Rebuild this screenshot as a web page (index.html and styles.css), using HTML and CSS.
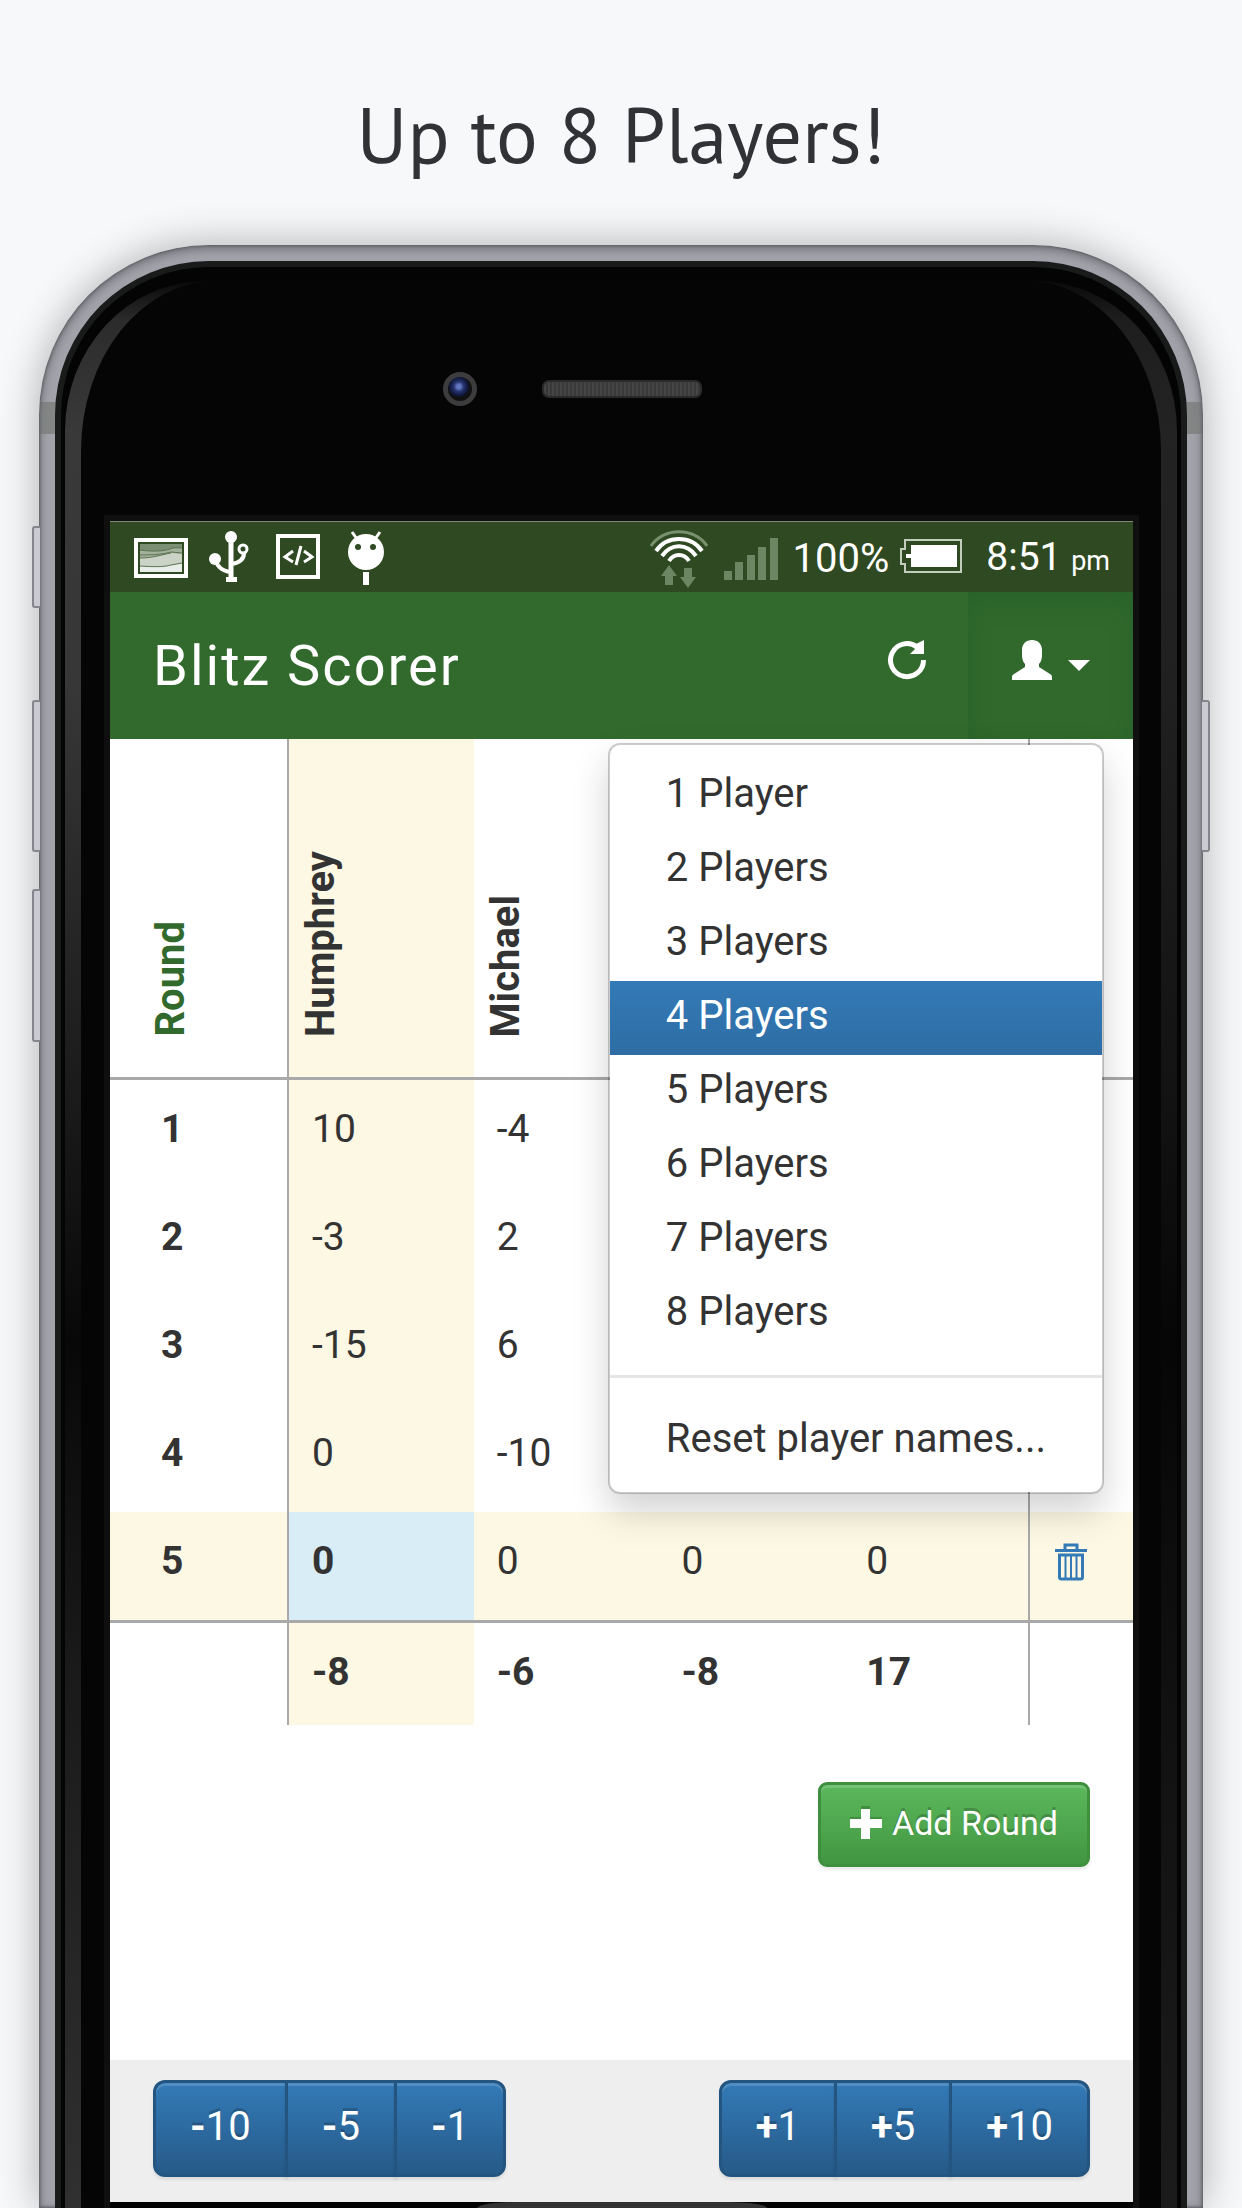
FILE: index.html
```html
<!DOCTYPE html>
<html lang="en">
<head>
<meta charset="utf-8">
<meta name="viewport" content="width=device-width, initial-scale=1">
<title>Blitz Scorer</title>
<link rel="stylesheet" href="styles.css">
</head>
<body>
<h1 class="headline">Up to 8 Players!</h1>
<div class="phone">
  <span class="key key-mute"></span>
  <span class="key key-up"></span>
  <span class="key key-down"></span>
  <span class="key key-power"></span>
  <div class="rim">
    <div class="glare">
      <div class="face">
        <div class="sensors">
          <span class="camera"></span>
          <span class="speaker"></span>
        </div>
        <div class="screen">
          <div class="status">
            <div class="notices">
              <svg width="54" height="56" viewBox="0 0 54 56">
                <rect x="2" y="9" width="50" height="36" fill="none" stroke="#fff" stroke-width="4"/>
                <rect x="6" y="13" width="42" height="28" fill="#7b8f72"/>
                <path d="M6 19c14 2 24 1 30-1 4-2 8-1 12-1v24H6z" fill="#a3b19c"/>
                <path d="M6 27c14 0 24-4 31-5l11 1v18H6z" fill="#cbd3c7"/>
                <path d="M6 35c14 1 24 1 31-1l11-2v9H6z" fill="#e9ede8"/>
                <path d="M6 19c14 2 24 1 30-1 4-2 8-1 12-1M6 24c14 0 24-1 31-3l11 1M6 27c14 0 24-4 31-5M6 35c14 1 24 1 31-1l11-2" fill="none" stroke="#5c7350" stroke-width="1"/>
                <rect x="5" y="12" width="44" height="30" fill="none" stroke="#2f4a22" stroke-width="2"/>
              </svg>
              <svg width="48" height="56" viewBox="0 0 48 56">
                <g fill="none" stroke="#fff">
                  <path d="M23 8v42" stroke-width="5"/>
                  <path d="M7 24c0 11 7 16 16 17" stroke-width="4"/>
                  <path d="M36 22c0 7-5 10-13 11" stroke-width="4"/>
                  <circle cx="35" cy="18" r="4" stroke-width="3"/>
                </g>
                <g fill="#fff"><circle cx="23" cy="6" r="6"/><circle cx="7" cy="28" r="6"/><path d="M18 46h11v5H18z"/></g>
              </svg>
              <svg width="44" height="56" viewBox="0 0 44 56">
                <rect x="2" y="5" width="40" height="41" fill="none" stroke="#fff" stroke-width="4"/>
                <path d="M17 20l-8 6 8 5M28 20l8 6-8 5" fill="none" stroke="#fff" stroke-width="3"/>
                <path d="M25 15l-5 19" stroke="#fff" stroke-width="3"/>
              </svg>
              <svg width="48" height="56" viewBox="0 0 48 56">
                <path d="M12 1l5 7M40 1l-5 7" stroke="#fff" stroke-width="3"/>
                <circle cx="26" cy="21" r="18" fill="#fff"/>
                <circle cx="18" cy="16" r="3" fill="#2f4a22"/><circle cx="33" cy="16" r="3" fill="#2f4a22"/>
                <path d="M23 41h6v13h-6z" fill="#fff"/>
              </svg>
            </div>
            <svg width="60" height="58" viewBox="0 0 60 58">
              <g fill="none" stroke-width="4">
                <path d="M2 16C14-3 46-3 58 16" stroke="#78906d" stroke-width="3"/>
                <path d="M7 21C18 5 42 5 53 21M13 26C22 13 38 13 47 26M20 31C25 23 35 23 40 31" stroke="#fff"/>
              </g>
              <path d="M20 35l8 11h-4v9h-8v-9h-4zM39 58l8-11h-4v-9h-8v9h-4z" fill="#6c8562"/>
            </svg>
            <svg width="54" height="56" viewBox="0 0 54 56" fill="#6c8562">
              <path d="M0 40h8v9H0zM11 31h8v18h-8zM23 24h8v25h-8zM34 16h8v33h-8zM46 7h8v42h-8z"/>
            </svg>
            <span class="level">100%
              <svg width="64" height="56" viewBox="0 0 64 56">
                <path d="M6 11h56v32H6v-8H2V20h4z" fill="none" stroke="#c3cdbc" stroke-width="2"/>
                <path d="M12 16h46v22H12v-9H7v-4h5z" fill="#fff"/>
              </svg>
            </span>
            <span class="clock">8:51 <small class="ampm">pm</small></span>
          </div>
          <nav class="navbar">
            <a class="brand" href="#">Blitz Scorer</a>
            <button class="nav-button" type="button" aria-label="Restart">
              <svg width="40" height="40" viewBox="0 0 40 40">
                <path d="M36.500 20A16.500 16.500 0 1 1 30 7" fill="none" stroke="#fff" stroke-width="5"/>
                <path d="M37 0v14H23l5-5z" fill="#fff"/>
                <path d="M25 6l7 6 5-12z" fill="#fff"/>
              </svg>
            </button>
            <div class="dropdown">
              <button class="nav-button nav-open" type="button" aria-label="Players" aria-expanded="true">
                <svg width="40" height="40" viewBox="0 0 40 40" fill="#fff">
                  <path d="M20 0c6 0 10 4 10 10v5c0 4-1 7-3 9v3l11 7c2 1 2 2 2 6H0c0-4 0-5 2-6l11-7v-3c-2-2-3-5-3-9v-5C10 4 14 0 20 0z"/>
                </svg>
                <svg width="22" height="40" viewBox="0 0 22 40" fill="#fff"><path d="M0 20h22L11 31z"/></svg>
              </button>
              <ul class="menu">
                <li><a class="item" href="#">1 Player</a></li>
                <li><a class="item" href="#">2 Players</a></li>
                <li><a class="item" href="#">3 Players</a></li>
                <li><a class="item item-active" href="#">4 Players</a></li>
                <li><a class="item" href="#">5 Players</a></li>
                <li><a class="item" href="#">6 Players</a></li>
                <li><a class="item" href="#">7 Players</a></li>
                <li><a class="item" href="#">8 Players</a></li>
                <li class="divider" role="separator"></li>
                <li><a class="item" href="#">Reset player names...</a></li>
              </ul>
            </div>
          </nav>
          <main class="content">
            <table class="scores">
              <colgroup><col class="col-round"><col><col><col><col><col class="col-tools"></colgroup>
              <thead>
                <tr><th><span class="upright">Round</span></th><th class="current"><span class="upright">Humphrey</span></th><th><span class="upright">Michael</span></th><th></th><th></th><th></th></tr>
              </thead>
              <tbody>
                <tr><th>1</th><td class="current">10</td><td>-4</td><td></td><td></td><td></td></tr>
                <tr><th>2</th><td class="current">-3</td><td>2</td><td></td><td></td><td></td></tr>
                <tr><th>3</th><td class="current">-15</td><td>6</td><td></td><td></td><td></td></tr>
                <tr><th>4</th><td class="current">0</td><td>-10</td><td></td><td></td><td></td></tr>
                <tr class="current"><th>5</th><td class="editing">0</td><td>0</td><td>0</td><td>0</td>
                  <td><button class="trash" type="button" aria-label="Delete round">
                    <svg width="32" height="38" viewBox="0 0 32 38" fill="none" stroke="#337ab7">
                      <path d="M0 7.500h32" stroke-width="3"/>
                      <path d="M10 7V2h12v5" stroke-width="3"/>
                      <path d="M4.500 12v22q0 2 2 2h19q2 0 2-2V12z" stroke-width="3"/>
                      <path d="M10.500 13v22M16 13v22M21.500 13v22" stroke-width="2"/>
                    </svg></button></td></tr>
              </tbody>
              <tfoot>
                <tr><td></td><td class="current">-8</td><td>-6</td><td>-8</td><td>17</td><td></td></tr>
              </tfoot>
            </table>
            <button class="add" type="button">
              <svg width="32" height="34" viewBox="0 0 32 34"><path d="M11 0h9v11h12v9H20v11h-9V20H0v-9h11z" fill="#3f8f3f"/><path d="M11 3h9v10h12v9H20v11h-9V22H0v-9h11z" fill="#fff"/></svg>
              Add Round
            </button>
          </main>
          <footer class="toolbar">
            <div class="group">
              <button class="step" type="button"><b>-</b>10</button><button class="step" type="button"><b>-</b>5</button><button class="step" type="button"><b>-</b>1</button>
            </div>
            <div class="group">
              <button class="step" type="button"><b>+</b>1</button><button class="step" type="button"><b>+</b>5</button><button class="step" type="button"><b>+</b>10</button>
            </div>
          </footer>
        </div>
        <div class="chin"><span class="home"></span></div>
      </div>
    </div>
  </div>
</div>
</body>
</html>
```
FILE: styles.css
```css
* { box-sizing: border-box; }

body {
  margin: 0;
  min-height: 100vh;
  display: flex;
  flex-direction: column;
  background: #f6f8fa;
  color: #333;
  font: 39px/60px Roboto, "Liberation Sans", sans-serif;
}

svg { display: block; flex: none; }
button { font: inherit; cursor: pointer; }

.headline {
  margin: 0;
  padding: 85px 0 60px;
  text-align: center;
  color: #303235;
  font: 400 78px/100px "PT Sans", Lato, "Noto Sans", sans-serif;
}

/* Device shell */
.phone {
  position: relative;
  flex: 1;
  display: flex;
  margin: 0 39px;
  padding: 16px 16px 0;
  border-radius: 170px 170px 0 0;
  background:
    linear-gradient(transparent 157px, rgba(100, 106, 96, .5) 157px 189px, transparent 189px),
    #a2a2aa;
  box-shadow: inset 0 0 3px 1px #5c5d63, inset 0 3px 8px 2px #78787f, 0 0 40px rgba(0, 0, 0, .3);
}

.key {
  position: absolute;
  left: -7px;
  width: 8px;
  border: 2px solid #85868d;
  border-right: 0;
  border-radius: 3px 0 0 3px;
  background: #c9cad2;
}
.key-mute { top: 281px; height: 82px; }
.key-up { top: 455px; height: 152px; }
.key-down { top: 644px; height: 153px; }
.key-power {
  top: 455px;
  left: auto;
  right: -7px;
  height: 152px;
  border: 2px solid #85868d;
  border-left: 0;
  border-radius: 0 3px 3px 0;
}

.rim {
  flex: 1;
  display: flex;
  padding: 14px 4px 0;
  border: 6px solid #191b1a;
  border-bottom: 0;
  border-radius: 154px 154px 0 0;
  background: #040404;
}

.glare {
  flex: 1;
  display: flex;
  padding: 0 16px;
  border-radius: 140px 140px 0 0 / 150px 150px 0 0;
  background:
    linear-gradient(#0a0a0a, #2c2c2c 40px, #393939 150px, #373737 400px, #1a1a1a 820px, #080808 1060px, #1a1a1a 1400px, #303030) left / 50% 100% no-repeat,
    linear-gradient(#0a0a0a, #1e1e1e 40px, #232323 150px, #202020 400px, #121212 820px, #060606 1060px, #101010 1400px, #1b1b1b) right / 50% 100% no-repeat;
}

.face {
  flex: 1;
  min-width: 0;
  display: flex;
  flex-direction: column;
  padding: 0 28px 0 29px;
  border-radius: 135px 135px 0 0 / 170px 170px 0 0;
  background: #050505;
}

.sensors {
  height: 240px;
  padding-bottom: 24px;
  display: grid;
  grid-template-columns: 1fr auto 1fr;
  align-items: center;
}
.camera {
  justify-self: end;
  width: 34px;
  height: 34px;
  margin-right: 65px;
  border: 5px solid #3c3b3d;
  border-radius: 50%;
  background: radial-gradient(circle at 45% 40%, #6478c0 0 2px, #26336f 5px, #10183c 9px, #111 11px);
}
.speaker {
  width: 160px;
  height: 18px;
  border: 2px solid #2a2a2a;
  border-radius: 7px;
  background: repeating-linear-gradient(90deg, #454545 0 2px, #393939 2px 4px);
}

.screen {
  flex: 1;
  display: flex;
  flex-direction: column;
  background: #fff;
  box-shadow: 0 0 0 6px #100f10;
}

.chin { height: 6px; display: flex; justify-content: center; background: #000; z-index: 1; }
.home { width: 290px; border-radius: 40px 40px 0 0 / 6px 6px 0 0; background: #333; }

/* Status bar */
.status {
  height: 71px;
  display: flex;
  align-items: center;
  gap: 15px;
  padding: 4px 23px 0 24px;
  border-top: 1px solid #7d8b76;
  background: #2f4a22;
  color: #fff;
}
.notices { flex: 1; display: flex; gap: 20px; }
.level { display: flex; gap: 10px; font-size: 40px; }
.clock { margin-left: 8px; }
.ampm { font-size: 27px; }

/* Navigation bar */
.navbar {
  height: 147px;
  display: flex;
  background: #326a2d;
}
.brand {
  flex: 1;
  padding: 0 43px;
  color: #fff;
  font-size: 56px;
  line-height: 148px;
  letter-spacing: 2px;
  text-decoration: none;
}
.nav-button {
  height: 100%;
  display: flex;
  align-items: center;
  gap: 16px;
  padding: 0 41px 12px;
  border: 0;
  background: none;
}
.dropdown { position: relative; }
.nav-open {
  padding: 0 43px 12px 44px;
  background: #31692c;
  box-shadow: inset 0 9px 27px rgba(0, 60, 30, .16);
}

.menu {
  position: absolute;
  top: 151px;
  right: 29px;
  margin: 0;
  padding: 14px 0;
  list-style: none;
  border: 2px solid rgba(0, 0, 0, .2);
  border-radius: 12px;
  background: #fff;
  background-clip: padding-box;
  box-shadow: 0 18px 36px rgba(0, 0, 0, .175);
}
.item {
  display: block;
  padding: 5px 56px 9px;
  color: #333;
  font-size: 40px;
  white-space: nowrap;
  text-decoration: none;
}
.item-active {
  color: #fff;
  background: linear-gradient(#337ab7, #2e6da4);
}
.divider { height: 3px; margin: 24px 0 26px; background: #e5e5e5; }

/* Score sheet */
.content {
  flex: 1;
  display: flex;
  flex-direction: column;
}
.scores {
  width: 100%;
  table-layout: fixed;
  border-collapse: separate;
  border-spacing: 0;
}
.col-round { width: 179px; }
.col-tools { width: 105px; }
.scores th, .scores td {
  height: 108px;
  padding: 19px 23px 29px;
  text-align: left;
}
.scores tr > :first-child { padding-left: 51px; border-right: 2px solid #a9a9a9; }
.scores tr > :last-child { padding-left: 25px; border-left: 2px solid #a9a9a9; }
.scores thead th {
  height: 341px;
  padding: 0 9px 40px;
  vertical-align: bottom;
  border-bottom: 3px solid #a9a9a9;
}
.scores thead tr > :first-child { padding-left: 38px; color: #326a2d; }
.upright {
  display: block;
  width: 46px;
  font-size: 40px;
  line-height: 46px;
  writing-mode: vertical-rl;
  transform: rotate(180deg);
}
.current { background: #fcf8e3; }
.editing { background: #d9edf7; font-weight: 700; }
.scores tfoot td {
  height: 105px;
  padding-top: 19px;
  padding-bottom: 23px;
  border-top: 3px solid #a9a9a9;
  font-weight: 700;
}
.trash {
  display: block;
  padding: 1px 0 0;
  border: 0;
  background: none;
}

/* Glossy buttons */
.add, .step {
  color: #fff;
  text-shadow: 0 -3px 0 rgba(0, 0, 0, .2);
  box-shadow: inset 0 3px 0 rgba(255, 255, 255, .15), 0 3px 3px rgba(0, 0, 0, .075);
}
.add {
  align-self: flex-end;
  display: flex;
  align-items: center;
  gap: 10px;
  height: 85px;
  margin: 57px 43px;
  padding: 0 29px 3px;
  border: 3px solid #3e8f3e;
  border-radius: 9px;
  background: linear-gradient(#5cb85c, #419641);
  font-size: 34px;
}

.toolbar {
  height: 142px;
  display: flex;
  justify-content: space-between;
  padding: 20px 43px 25px;
  background: #eee;
}
.group { display: flex; }
.step {
  height: 97px;
  padding: 0 34px 3px;
  border: 3px solid #245580;
  background: linear-gradient(#337ab7, #265a88);
  font-size: 40px;
}
.step:first-child { border-radius: 12px 0 0 12px; }
.step:last-child { border-radius: 0 12px 12px 0; }
.step + .step { margin-left: -3px; }
```
